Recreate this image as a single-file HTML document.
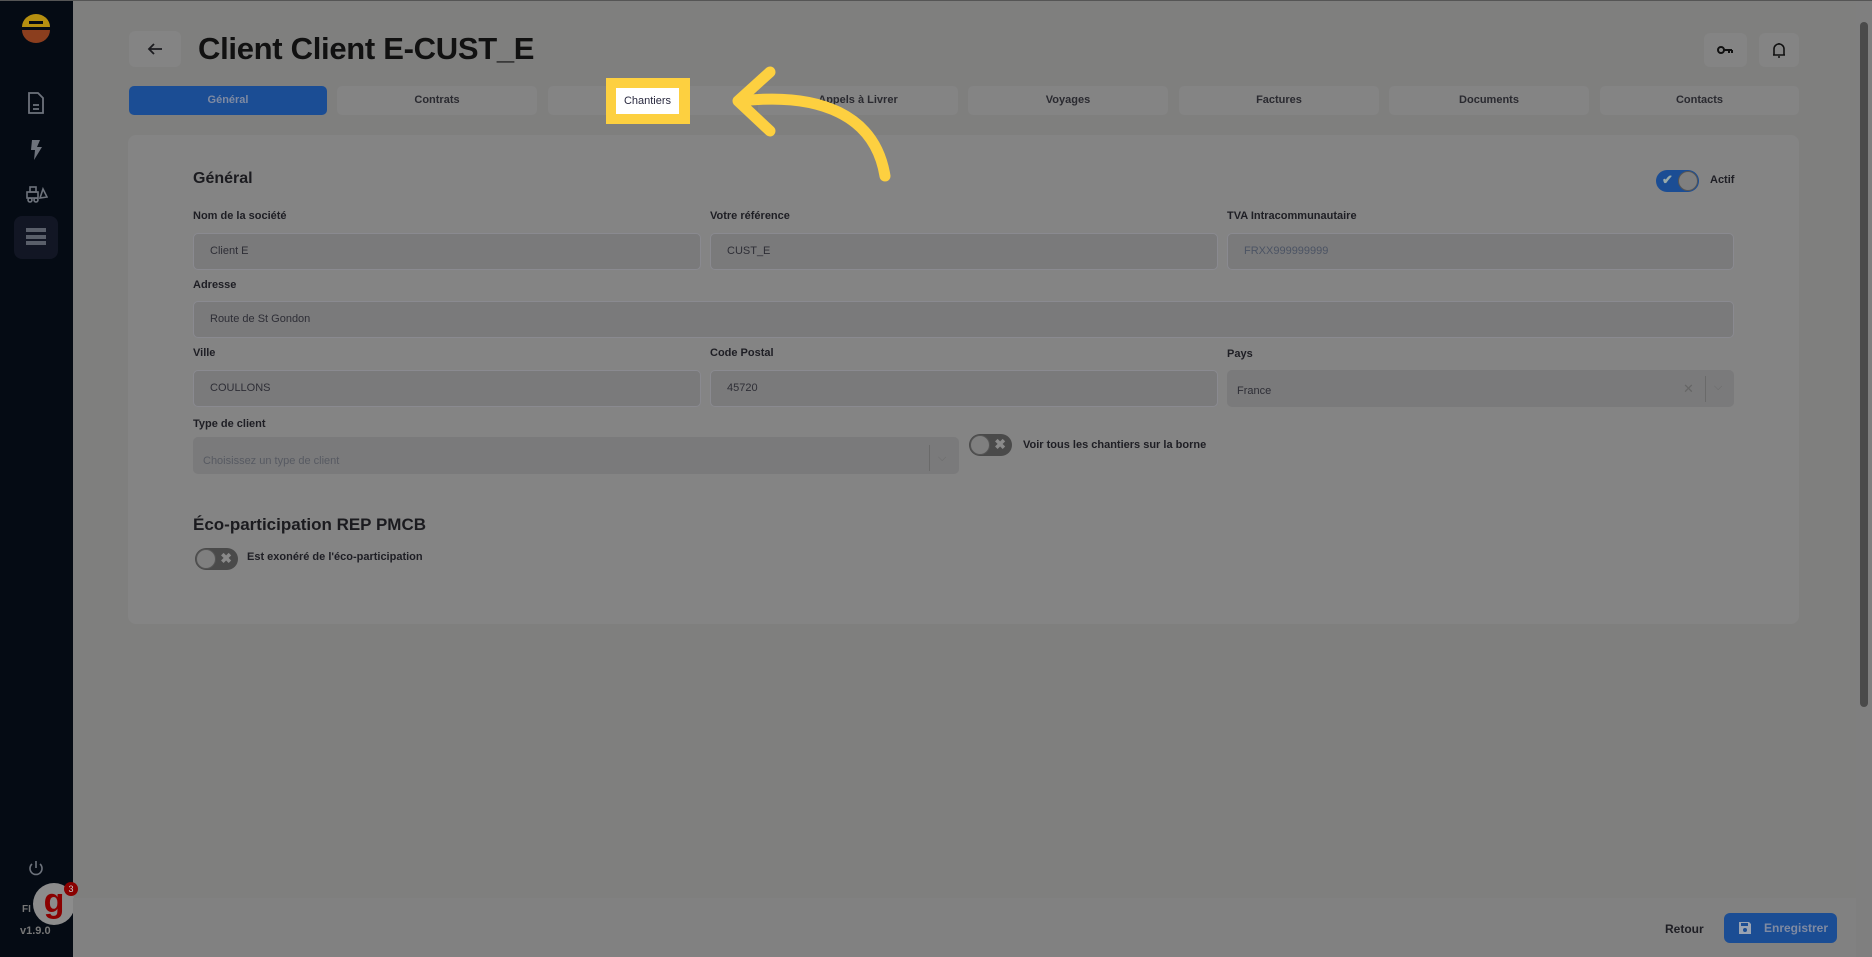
<!DOCTYPE html>
<html><head><meta charset="utf-8"><style>
*{box-sizing:border-box;margin:0;padding:0}
body{width:1872px;height:957px;overflow:hidden;background:#7f7f7e;font-family:"Liberation Sans",Arial,sans-serif;position:relative;color:#1b1b1f}
.abs{position:absolute}
.side{left:0;top:0;width:73px;height:957px;background:#050b14}
.btn{background:#848484;border-radius:6px}
.tab{position:absolute;top:86px;height:29px;width:200px;background:#848484;border-radius:5px;font-size:11px;font-weight:bold;color:#2a2a30;text-align:center;line-height:29px}
.lbl{position:absolute;font-size:11px;font-weight:bold;color:#1e1e24}
.inp{position:absolute;height:37px;background:#7a7a7b;border:1px solid #8a8a90;border-radius:5px;font-size:11px;color:#2e2e36;padding-left:16px;line-height:35px}
.tg{position:absolute;width:43px;height:22px;border-radius:11px;background:#4a4a4a}
.tg .k{position:absolute;left:1px;top:1px;width:20px;height:20px;border-radius:50%;background:#7f7f7f;border:1px solid #555}
.tg .x{position:absolute;right:6px;top:2px;color:#8a8a8a;font-weight:bold;font-size:14px}
</style></head><body>
<div class="abs side">
 <svg class="abs" style="left:20px;top:14px" width="32" height="30" viewBox="0 0 32 30"><path d="M2 13A14 13 0 0 1 30 13Z" fill="#b58f10"/><rect x="9" y="7" width="14" height="3" fill="#050b14"/><path d="M2 16H30A14 13 0 0 1 2 16Z" fill="#8b3e1e"/></svg>
 <svg class="abs" style="left:27px;top:92px" width="18" height="22" viewBox="0 0 18 22" fill="none" stroke="#6e737c" stroke-width="1.8"><path d="M2 1H11L16 6V21H2Z"/><path d="M6 13H12M6 17H12"/></svg>
 <svg class="abs" style="left:28px;top:139px" width="16" height="22" viewBox="0 0 16 22"><path d="M4 1H12L9 8H14L6 21L7 11H3Z" fill="#6e737c"/></svg>
 <svg class="abs" style="left:26px;top:185px" width="22" height="18" viewBox="0 0 22 18" fill="none" stroke="#6e737c" stroke-width="1.6"><rect x="1" y="7" width="11" height="6"/><rect x="4" y="2" width="6" height="5"/><circle cx="4" cy="15" r="2"/><circle cx="10" cy="15" r="2"/><path d="M14 13L17 4L21 12Z"/></svg>
 <div class="abs" style="left:14px;top:216px;width:44px;height:43px;background:#121624;border-radius:8px"></div>
 <div class="abs" style="left:26px;top:228px;width:20px;height:4px;background:#5a5f6a"></div>
 <div class="abs" style="left:26px;top:235px;width:20px;height:4px;background:#5a5f6a"></div>
 <div class="abs" style="left:26px;top:241px;width:20px;height:4px;background:#5a5f6a"></div>
 <svg class="abs" style="left:28px;top:859px" width="16" height="18" viewBox="0 0 16 18" fill="none" stroke="#6e737c" stroke-width="1.6"><path d="M8 2V9"/><path d="M4 5A6 6 0 1 0 12 5"/></svg>
 <div class="abs" style="left:22px;top:904px;font-size:10px;color:#777;font-weight:bold">FI</div>
 <div class="abs" style="left:20px;top:925px;font-size:11px;color:#777;font-weight:bold">v1.9.0</div>
 <div class="abs" style="left:33px;top:883px;width:42px;height:42px;border-radius:50%;background:#8c8c8c;color:#8a0000;font-size:34px;font-weight:bold;text-align:center;line-height:36px">g</div>
 <div class="abs" style="left:64px;top:882px;width:14px;height:14px;border-radius:50%;background:#8a0000;color:#ccc;font-size:9px;text-align:center;line-height:14px">3</div>
</div>
<div class="abs btn" style="left:129px;top:31px;width:52px;height:36px"></div>
<svg class="abs" style="left:146px;top:41px" width="18" height="16" viewBox="0 0 18 16" fill="none" stroke="#1b1b1f" stroke-width="1.8"><path d="M16 8H3M8 3L3 8L8 13"/></svg>
<div class="abs" style="left:198px;top:31px;font-size:31px;font-weight:bold;color:#111;letter-spacing:-0.3px">Client Client E-CUST_E</div>
<div class="abs btn" style="left:1704px;top:33px;width:43px;height:34px"></div>
<div class="abs btn" style="left:1759px;top:33px;width:40px;height:34px"></div>
<svg class="abs" style="left:1716px;top:44px" width="18" height="12" viewBox="0 0 18 12" fill="none" stroke="#111" stroke-width="2"><circle cx="5" cy="6" r="3"/><path d="M8 6H16M13 6V9M16 6V9"/></svg>
<svg class="abs" style="left:1771px;top:41px" width="16" height="18" viewBox="0 0 16 18" fill="none" stroke="#111" stroke-width="1.6"><path d="M3 14V8A5 5 0 0 1 13 8V14H2H14M8 2V3M7 16H9"/></svg>
<div class="tab" style="left:129px;width:198px;background:#1b4d94;color:#7f8aa2">Général</div>
<div class="tab" style="left:337px">Contrats</div>
<div class="tab" style="left:548px"></div>
<div class="tab" style="left:758px">Appels à Livrer</div>
<div class="tab" style="left:968px">Voyages</div>
<div class="tab" style="left:1179px">Factures</div>
<div class="tab" style="left:1389px">Documents</div>
<div class="tab" style="left:1600px;width:199px">Contacts</div>
<div class="abs" style="left:128px;top:135px;width:1671px;height:489px;background:#848484;border-radius:8px"></div>
<div class="abs" style="left:606px;top:78px;width:84px;height:46px;background:#fdd040"></div>
<div class="abs" style="left:616px;top:88px;width:63px;height:26px;background:#fff;font-size:11px;color:#2a2a40;text-align:center;line-height:26px">Chantiers</div>
<svg class="abs" style="left:0;top:0" width="1872" height="957"><g fill="none" stroke="#fdd040" stroke-width="11" stroke-linecap="round" stroke-linejoin="round"><path d="M740 101C820 92 875 115 885 176"/><path d="M770 72L738 101L770 131"/></g></svg>
<div class="abs" style="left:193px;top:170px;font-size:16px;font-weight:bold">Général</div>
<div class="tg" style="left:1656px;top:170px;background:#1b4d94"><div class="k" style="left:22px"></div><div style="position:absolute;left:6px;top:2px;color:#9aa;font-size:13px;font-weight:bold">✔</div></div>
<div class="lbl" style="left:1710px;top:174px">Actif</div>
<div class="lbl" style="left:193px;top:210px">Nom de la société</div>
<div class="lbl" style="left:710px;top:210px">Votre référence</div>
<div class="lbl" style="left:1227px;top:210px">TVA Intracommunautaire</div>
<div class="inp" style="left:193px;top:233px;width:508px">Client E</div>
<div class="inp" style="left:710px;top:233px;width:508px">CUST_E</div>
<div class="inp" style="left:1227px;top:233px;width:507px;color:#4c5464">FRXX999999999</div>
<div class="lbl" style="left:193px;top:279px">Adresse</div>
<div class="inp" style="left:193px;top:301px;width:1541px">Route de St Gondon</div>
<div class="lbl" style="left:193px;top:347px">Ville</div>
<div class="lbl" style="left:710px;top:347px">Code Postal</div>
<div class="lbl" style="left:1227px;top:348px">Pays</div>
<div class="inp" style="left:193px;top:370px;width:508px">COULLONS</div>
<div class="inp" style="left:710px;top:370px;width:508px">45720</div>
<div class="inp" style="left:1227px;top:370px;width:507px;border:none;padding-left:10px;line-height:43px;height:37px">France</div>
<div class="abs" style="left:1683px;top:381px;font-size:13px;color:#666">✕</div>
<div class="abs" style="left:1705px;top:376px;width:1px;height:26px;background:#6a6a6a"></div>
<div class="abs" style="left:1714px;top:381px;font-size:11px;color:#6a6a6a">⌵</div>
<div class="lbl" style="left:193px;top:418px">Type de client</div>
<div class="inp" style="left:193px;top:437px;width:766px;border:none;color:#575a62;line-height:48px;padding-left:10px">Choisissez un type de client</div>
<div class="abs" style="left:929px;top:445px;width:1px;height:26px;background:#6a6a6a"></div>
<div class="abs" style="left:938px;top:452px;font-size:11px;color:#6a6a6a">⌵</div>
<div class="tg" style="left:969px;top:434px"><div class="k"></div><div class="x">✖</div></div>
<div class="lbl" style="left:1023px;top:439px">Voir tous les chantiers sur la borne</div>
<div class="abs" style="left:193px;top:515px;font-size:17px;font-weight:bold">Éco-participation REP PMCB</div>
<div class="tg" style="left:195px;top:548px"><div class="k"></div><div class="x">✖</div></div>
<div class="lbl" style="left:247px;top:551px">Est exonéré de l'éco-participation</div>
<div class="abs" style="left:73px;top:898px;width:1783px;height:59px;background:#818181"></div>
<div class="lbl" style="left:1665px;top:922px;font-size:12px">Retour</div>
<div class="abs" style="left:1724px;top:913px;width:113px;height:30px;background:#1b4d94;border-radius:6px"></div>
<svg class="abs" style="left:1738px;top:921px" width="14" height="14" viewBox="0 0 14 14"><path d="M1 1H11L13 3V13H1Z" fill="#9aa3b2"/><rect x="3" y="2" width="7" height="3" fill="#1b4d94"/><circle cx="7" cy="9" r="2" fill="#1b4d94"/></svg>
<div class="abs" style="left:1764px;top:921px;font-size:12px;font-weight:bold;color:#7f8aa2">Enregistrer</div>
<div class="abs" style="left:1856px;top:0;width:16px;height:957px;background:#7f7f7f"></div>
<div class="abs" style="left:1860px;top:22px;width:8px;height:685px;background:#4a4a4a;border-radius:4px"></div>
<div class="abs" style="left:0;top:0;width:1872px;height:1px;background:#555"></div>
</body></html>
